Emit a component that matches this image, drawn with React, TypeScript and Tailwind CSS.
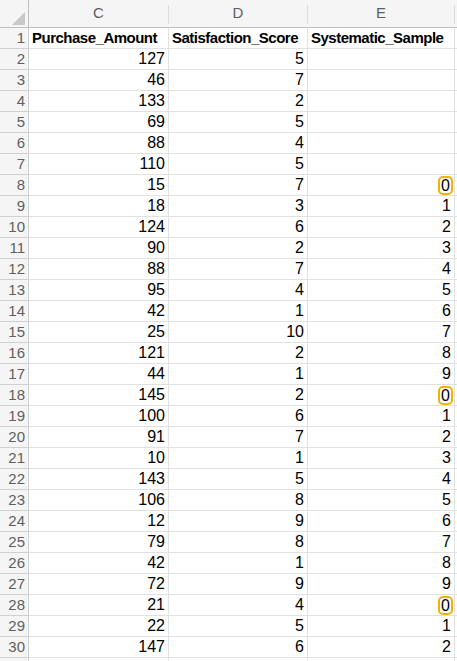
import React from "react";

const rows: [number, string, string, string, boolean?][] = [
  [2, "127", "5", ""],
  [3, "46", "7", ""],
  [4, "133", "2", ""],
  [5, "69", "5", ""],
  [6, "88", "4", ""],
  [7, "110", "5", ""],
  [8, "15", "7", "0", true],
  [9, "18", "3", "1"],
  [10, "124", "6", "2"],
  [11, "90", "2", "3"],
  [12, "88", "7", "4"],
  [13, "95", "4", "5"],
  [14, "42", "1", "6"],
  [15, "25", "10", "7"],
  [16, "121", "2", "8"],
  [17, "44", "1", "9"],
  [18, "145", "2", "0", true],
  [19, "100", "6", "1"],
  [20, "91", "7", "2"],
  [21, "10", "1", "3"],
  [22, "143", "5", "4"],
  [23, "106", "8", "5"],
  [24, "12", "9", "6"],
  [25, "79", "8", "7"],
  [26, "42", "1", "8"],
  [27, "72", "9", "9"],
  [28, "21", "4", "0", true],
  [29, "22", "5", "1"],
  [30, "147", "6", "2"],
];

const font = { fontFamily: '"Liberation Sans", Arial, sans-serif' };

export default function App() {
  return (
    <div className="w-[457px] h-[661px] overflow-hidden bg-white text-black" style={font}>
      {/* column header */}
      <div className="flex h-[28px] bg-[#f5f5f5] border-b border-[#bfbfbf]">
        <div className="relative w-[29px] shrink-0 border-r border-[#bfbfbf]">
          <svg className="absolute left-[12px] top-[12px]" width="13" height="13" viewBox="0 0 13 13">
            <polygon points="13,0 13,13 0,13" fill="#c8c8c8" />
          </svg>
        </div>
        {[
          ["C", "w-[140px]"],
          ["D", "w-[139px]"],
          ["E", "w-[147px]"],
        ].map(([l, w]) => (
          <div key={l} className={`${w} shrink-0 flex items-end pb-[3px]`}>
            <div className="flex-1 h-full pt-[8px] flex items-end justify-center text-[15px] text-[#5f5f5f]">{l}</div>
            <div className="w-px h-[19px] bg-[#dcdcdc]" />
          </div>
        ))}
      </div>
      {/* row 1 */}
      <div className="flex h-[21px]">
        <div className="w-[29px] shrink-0 bg-[#f5f5f5] border-r border-b border-[#d0d0d0] text-right pr-[3px] text-[15px] text-[#5f5f5f] leading-[20px]">1</div>
        <div className="w-[140px] shrink-0 border-r border-b border-[#e1e1e1] pl-[3px] font-bold text-[15px] tracking-[-0.5px] leading-[20px] whitespace-nowrap">Purchase_Amount</div>
        <div className="w-[139px] shrink-0 border-r border-b border-[#e1e1e1] pl-[3px] font-bold text-[15px] tracking-[-0.5px] leading-[20px] whitespace-nowrap">Satisfaction_Score</div>
        <div className="w-[147px] shrink-0 border-r border-b border-[#e1e1e1] pl-[3px] font-bold text-[15px] tracking-[-0.5px] leading-[20px] whitespace-nowrap">Systematic_Sample</div>
        <div className="flex-1 border-b border-[#e1e1e1]" />
      </div>
      {rows.map(([n, c, d, e, hl]) => (
        <div key={n} className="flex h-[21px]">
          <div className="w-[29px] shrink-0 bg-[#f5f5f5] border-r border-b border-[#d0d0d0] text-right pr-[3px] text-[15px] text-[#5f5f5f] leading-[20px]">{n}</div>
          <div className="w-[140px] shrink-0 border-r border-b border-[#e1e1e1] pr-[3px] text-right text-[16px] leading-[20px]">{c}</div>
          <div className="w-[139px] shrink-0 border-r border-b border-[#e1e1e1] pr-[3px] text-right text-[16px] leading-[20px]">{d}</div>
          <div className="w-[147px] shrink-0 border-r border-b border-[#e1e1e1] pr-[1px] flex items-center justify-end text-[16px] leading-[20px]">
            {hl ? (
              <span className="inline-flex items-center justify-center h-[19px] px-[1px] border-2 border-[#f0b400] rounded-[5px] leading-[15px]">{e}</span>
            ) : (
              <span className="pr-[2px]">{e}</span>
            )}
          </div>
          <div className="flex-1 border-b border-[#e1e1e1]" />
        </div>
      ))}
      <div className="flex h-[21px]">
        <div className="w-[29px] shrink-0 bg-[#f5f5f5] border-r border-[#d0d0d0]" />
        <div className="w-[140px] shrink-0 border-r border-[#e1e1e1]" />
        <div className="w-[139px] shrink-0 border-r border-[#e1e1e1]" />
        <div className="w-[147px] shrink-0 border-r border-[#e1e1e1]" />
      </div>
    </div>
  );
}
